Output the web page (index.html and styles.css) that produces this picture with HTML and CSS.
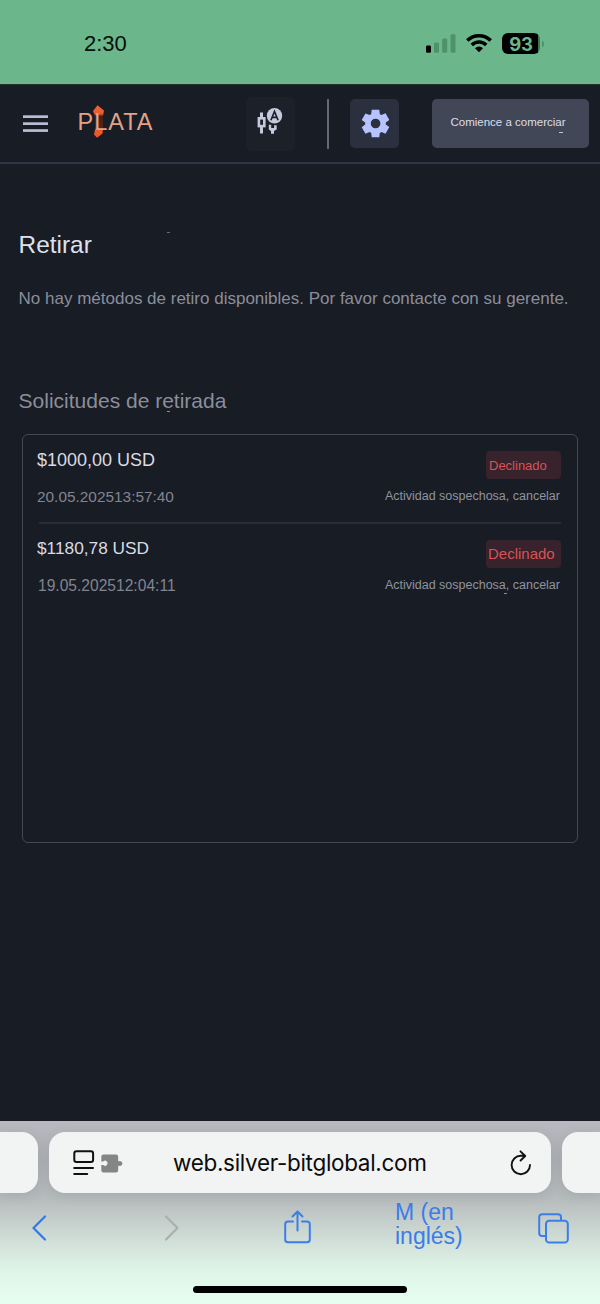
FILE: index.html
```html
<!DOCTYPE html>
<html lang="es">
<head>
<meta charset="utf-8">
<title>Retirar</title>
<link rel="stylesheet" href="styles.css">
</head>
<body>
<div class="screen">
  <div class="status">
    <span class="time">2:30</span>
    <div class="indicators">
      <svg class="signal" width="30" height="19" viewBox="0 0 30 19">
        <rect x="0" y="11.5" width="5" height="7.2" rx="1.3" fill="#000"/>
        <g fill="#4f9169"><rect x="8" y="8.5" width="5" height="10.2" rx="1.3"/><rect x="16.2" y="4.5" width="5" height="14.2" rx="1.3"/><rect x="24.5" y="0.3" width="5" height="18.4" rx="1.3"/></g>
      </svg>
      <svg class="wifi" width="26" height="20" viewBox="0 0 26 20">
        <g fill="none" stroke="#000" stroke-width="3.6"><path d="M1.3 7.5a16.6 16.6 0 0 1 23.4 0"/><path d="M5.8 12a10.2 10.2 0 0 1 14.4 0"/></g>
        <path d="M13 19.3l-4-4.1a5.8 5.8 0 0 1 8 0z" fill="#000"/>
      </svg>
      <div class="battery"><span class="level">93</span></div>
      <i class="battery-cap"></i>
    </div>
  </div>
  <header class="header">
    <svg class="menu" width="25" height="18" viewBox="0 0 25 18" fill="#b9bdd5"><rect y="0.3" width="25" height="2.7"/><rect y="7.3" width="25" height="2.7"/><rect y="14.2" width="25" height="2.7"/></svg>
    <div class="logo">
      <svg class="logo-mark" width="12" height="34" viewBox="0 0 12 34"><defs><linearGradient id="mark" x1="0" y1="0" x2="0" y2="1"><stop offset="0" stop-color="#ef6230"/><stop offset=".26" stop-color="#e95b2b"/><stop offset=".34" stop-color="#421f1b"/><stop offset=".7" stop-color="#56251a"/><stop offset=".78" stop-color="#ec5b29"/><stop offset="1" stop-color="#e8572a"/></linearGradient></defs><path d="M0 6L4.500 .3 11 5.500l-1 5.500v13l-.5 4.500-5.500 4.200-3-3.200 1-5V11z" fill="url(#mark)"/></svg>
      <span class="logo-text">PLATA</span>
    </div>
    <div class="tile chart">
      <svg width="27" height="29" viewBox="0 0 27 29">
        <path d="M4.500 4.500v5M4.500 19v6.500" stroke="#c5c9dc" stroke-width="3"/>
        <rect x="1.900" y="10.300" width="5.400" height="7.800" fill="none" stroke="#c5c9dc" stroke-width="2.600"/>
        <path d="M11.800 16.800v4.600l2.200 1.600v2.700h3V23l2.700-1.600v-4.100h-2.600v2.800h-2.900v-3.300z" fill="#c5c9dc"/>
        <circle cx="17.500" cy="7.800" r="7.700" fill="#c5c9dc"/>
        <path d="M13.900 12.200L17.500 3.400 21.100 12.200M15.100 9.400h4.800" fill="none" stroke="#1c2029" stroke-width="1.700"/>
      </svg>
    </div>
    <i class="separator"></i>
    <div class="tile settings">
      <svg width="33" height="33" viewBox="0 0 24 24"><path fill="#b5c4ff" d="M9.25 22l-.4-3.2q-.33-.12-.61-.3t-.56-.37L4.7 19.4l-2.75-4.75 2.58-1.95q-.03-.17-.03-.34v-.67q0-.16.03-.34L1.95 9.4 4.7 4.65l2.97 1.25q.28-.2.58-.37t.6-.3L9.25 2h5.5l.4 3.2q.33.13.61.3t.56.37l2.98-1.25 2.75 4.75-2.57 1.95q.02.17.02.34v.67q0 .17-.05.34l2.58 1.95-2.75 4.75-2.96-1.24q-.27.2-.57.37t-.6.3l-.4 3.2zM12.05 15.5q1.45 0 2.47-1.02T15.55 12t-1.03-2.47T12.05 8.5q-1.48 0-2.49 1.03T8.55 12t1.01 2.48 2.49 1.02z"/></svg>
    </div>
    <button class="trade">Comience a comerciar<i class="tick"></i></button>
  </header>
  <main class="content">
    <h1 class="title">Retirar<i class="tick"></i></h1>
    <p class="message">No hay métodos de retiro disponibles. Por favor contacte con su gerente.</p>
    <h2 class="subtitle">Solicitudes de retirada<i class="tick"></i></h2>
    <section class="requests">
      <article class="request first">
        <div class="row"><span class="amount">$1000,00 USD</span><span class="badge">Declinado</span></div>
        <div class="row detail"><span class="date">20.05.202513:57:40</span><span class="reason">Actividad sospechosa, cancelar</span></div>
      </article>
      <article class="request second">
        <div class="row"><span class="amount">$1180,78 USD</span><span class="badge">Declinado</span></div>
        <div class="row detail"><span class="date">19.05.202512:04:11</span><span class="reason">Actividad sospechosa, cancelar<i class="tick"></i></span></div>
      </article>
    </section>
  </main>
  <footer class="browser">
    <div class="tabs">
      <div class="tab previous"></div>
      <div class="tab address">
        <svg class="reader" width="22" height="26" viewBox="0 0 22 26" fill="none" stroke="#111" stroke-width="2" stroke-linecap="round"><rect x="1.3" y="1.3" width="18.8" height="10.6" rx="2.2"/><path d="M1.2 18H20M1.2 24h13"/></svg>
        <svg class="puzzle" width="22" height="19" viewBox="0 0 22 19"><path fill="#858587" d="M2.500.5H15q2.200 0 2.200 2.200V7.300h.8a2.400 2.400 0 1 1 0 4.400h-.8v4.600q0 2.200-2.200 2.200H2.500Q.3 18.500.3 16.300V11h2a2.500 2.500 0 1 0 0-3.500H.3V2.700Q.3.5 2.500.5z"/></svg>
        <span class="url">web.silver-bitglobal.com</span>
        <svg class="reload" width="22" height="26" viewBox="0 0 22 26" fill="none" stroke="#111" stroke-width="1.900" stroke-linecap="round" stroke-linejoin="round"><path d="M20 15a9.200 9.200 0 1 1-9.200-9.200h4.200M10.500 1.300L15.200 6l-4.600 4.500"/></svg>
      </div>
      <div class="tab next"></div>
    </div>
    <nav class="tools">
      <svg width="15" height="26" viewBox="0 0 15 26" fill="none" stroke="#3478e5" stroke-width="2.200" stroke-linecap="round" stroke-linejoin="round"><path d="M13 1.500L1.500 13 13 24.500"/></svg>
      <svg class="forward" width="15" height="26" viewBox="0 0 15 26" fill="none" stroke="#a8b1ad" stroke-width="2.200" stroke-linecap="round" stroke-linejoin="round"><path d="M2 1.500L13.500 13 2 24.500"/></svg>
      <svg class="share" width="27" height="34" viewBox="0 0 27 34" fill="none" stroke="#3d7de8" stroke-width="2" stroke-linecap="round" stroke-linejoin="round"><path d="M9 11.400H4Q1.200 11.400 1.200 14.200V29.500Q1.200 32.300 4 32.300H23Q25.800 32.300 25.800 29.500V14.200Q25.800 11.400 23 11.400H18M13.500 20.500V1.500M8.500 6.500l5-5 5 5"/></svg>
      <span class="translated">M (en<br>inglés)</span>
      <svg class="pages" width="31" height="31" viewBox="0 0 31 31" fill="none" stroke="#3d7de8" stroke-width="2"><path d="M8 23H4.200Q1.200 23 1.200 20V4.200Q1.200 1.200 4.200 1.200H20Q23 1.200 23 4.200V7.800"/><rect x="8" y="7.800" width="21.800" height="21.800" rx="3.200"/></svg>
    </nav>
    <i class="home"></i>
  </footer>
</div>
</body>
</html>
```
FILE: styles.css
```css
* { box-sizing: border-box; }
body { margin: 0; background: #181c25; font-family: "Liberation Sans", Arial, sans-serif; }
svg { display: block; flex: none; }
.screen { width: 600px; height: 1304px; display: flex; flex-direction: column; overflow: hidden; background: #181c25; }

.status { height: 84px; flex: none; background: #6cb68c; display: flex; justify-content: space-between; padding: 32px 56px 0 84px; }
.time { margin-top: -1px; font-size: 22px; line-height: 25px; height: 25px; color: #061008; }
.indicators { display: flex; align-items: flex-start; }
.signal { margin-top: 2px; }
.wifi { margin: 1px 10px 0; }
.battery { width: 38px; height: 21px; margin-top: 1px; border-radius: 6px; background: linear-gradient(90deg, #000 36px, #3d7753 36px); display: flex; justify-content: center; }
.level { font: 700 18.500px/22px Inter, sans-serif; color: #6cb68c; letter-spacing: -.3px; }
.battery-cap { width: 2px; height: 6px; margin: 9px 0 0 2px; background: #4f9169; border-radius: 0 2px 2px 0; }

.header { height: 80px; flex: none; border-top: 1px solid #22332f; border-bottom: 2px solid #2f3544; display: flex; align-items: flex-start; padding: 0 11px 0 23px; }
.menu { margin-top: 30px; }
.logo { position: relative; width: 118px; margin: 20px 0 0 29.500px; height: 34px; }
.logo-mark { position: absolute; left: 15px; top: 0; }
.logo-text { position: relative; display: block; font-size: 23.500px; line-height: 35px; letter-spacing: 1px; color: #e3a286; }
.tile { display: flex; align-items: center; justify-content: center; border-radius: 5px; flex: none; }
.chart { width: 49px; height: 54px; margin: 12px 0 0 50px; background: #1c2029; }
.chart svg { margin-top: -3px; }
.separator { width: 2px; height: 50px; margin: 14px 0 0 32px; background: #646873; }
.settings { width: 49px; height: 49px; margin: 14px 0 0 21.500px; padding-left: 1px; background: #2b303e; }
.trade { position: relative; width: 157px; height: 49px; margin: 14px 0 0 auto; padding: 0 5px 3px 0; border: 0; border-radius: 5px; background: #424758; color: #dcdee8; font: 11.500px "Liberation Sans", Arial, sans-serif; }
.tick { position: absolute; height: 1px; background: #8b8e99; }
.trade .tick { left: 127px; top: 33px; width: 4px; background: #c2c4cf; }

.content { flex: 1; padding: 0 18px 0 18.600px; }
h1, h2, p { margin: 0; font-weight: 400; position: relative; }
.title { margin-top: 66px; font-size: 24.400px; line-height: 30px; color: #dfe0e9; }
.title .tick { left: 148px; top: 2px; width: 3px; background: #686b74; }
.message { margin-top: 29px; font-size: 17px; line-height: 20px; color: #8b8e9a; white-space: nowrap; }
.subtitle { margin-top: 79px; font-size: 21px; line-height: 26px; color: #8b8e9a; }
.subtitle .tick { left: 148px; top: 23px; width: 3px; }
.requests { margin: 20px 4px 0 3.400px; height: 409px; border: 1.500px solid #454851; border-radius: 6px; padding: 16px 16px 0 14px; }
.row { display: flex; justify-content: space-between; margin-left: -2px; }
.request { margin-left: 2px; }
.request.first { height: 71px; }
.request.second { border-top: 2px solid #292d36; padding-top: 16px; }
.amount { font-size: 18px; line-height: 19px; color: #dadbe3; }
.second .amount { font-size: 17.300px; line-height: 17px; }
.badge { width: 75px; height: 28px; border-radius: 4px; background: #38222b; color: #d75358; font-size: 13px; line-height: 29px; padding-left: 3px; }
.second .badge { font-size: 15px; line-height: 28px; padding-left: 2px; }
.detail { margin-top: 8px; }
.date { font-size: 15.400px; line-height: 19px; color: #82858f; }
.second .date { font-size: 15.600px; margin-left: 1px; }
.reason { position: relative; font-size: 12.500px; line-height: 19px; margin-right: 1px; color: #90939d; }
.reason .tick { left: 119px; bottom: 1px; width: 3px; }

.browser { height: 183px; flex: none; display: flex; flex-direction: column; background: linear-gradient(#b9b9bf 0, #adb0b5 38px, #b5babb 75px, #d1dfd8 120px, #def4e7 148px, #e5fff1 183px); }
.tabs { display: grid; grid-template-columns: 38px 502px 38px; gap: 11px; margin-top: 11px; height: 61px; }
.tab { background: #f2f3f3; border-radius: 16px; box-shadow: 0 3px 12px rgba(70,75,80,.12); }
.previous { border-radius: 0 16px 16px 0; }
.next { border-radius: 16px 0 0 16px; }
.address { display: flex; align-items: center; padding: 0 19px 0 24px; }
.puzzle { margin: 2px 0 0 6px; }
.url { margin-left: 50px; font: 22.500px/30px Inter, sans-serif; letter-spacing: -.32px; color: #0b0b0c; white-space: nowrap; }
.reload { margin-left: auto; }
.tools { height: 70px; display: flex; align-items: center; padding: 0 31px 0 32px; }
.forward { margin-left: 117px; }
.share { margin: -2px 0 0 105px; }
.translated { width: 72px; margin: -8px 0 0 84px; font-size: 23px; line-height: 24px; color: #3b7ce8; }
.pages { margin-left: auto; }
.home { width: 214px; height: 7px; margin: 23px auto 0; border-radius: 4px; background: #000; }
```
